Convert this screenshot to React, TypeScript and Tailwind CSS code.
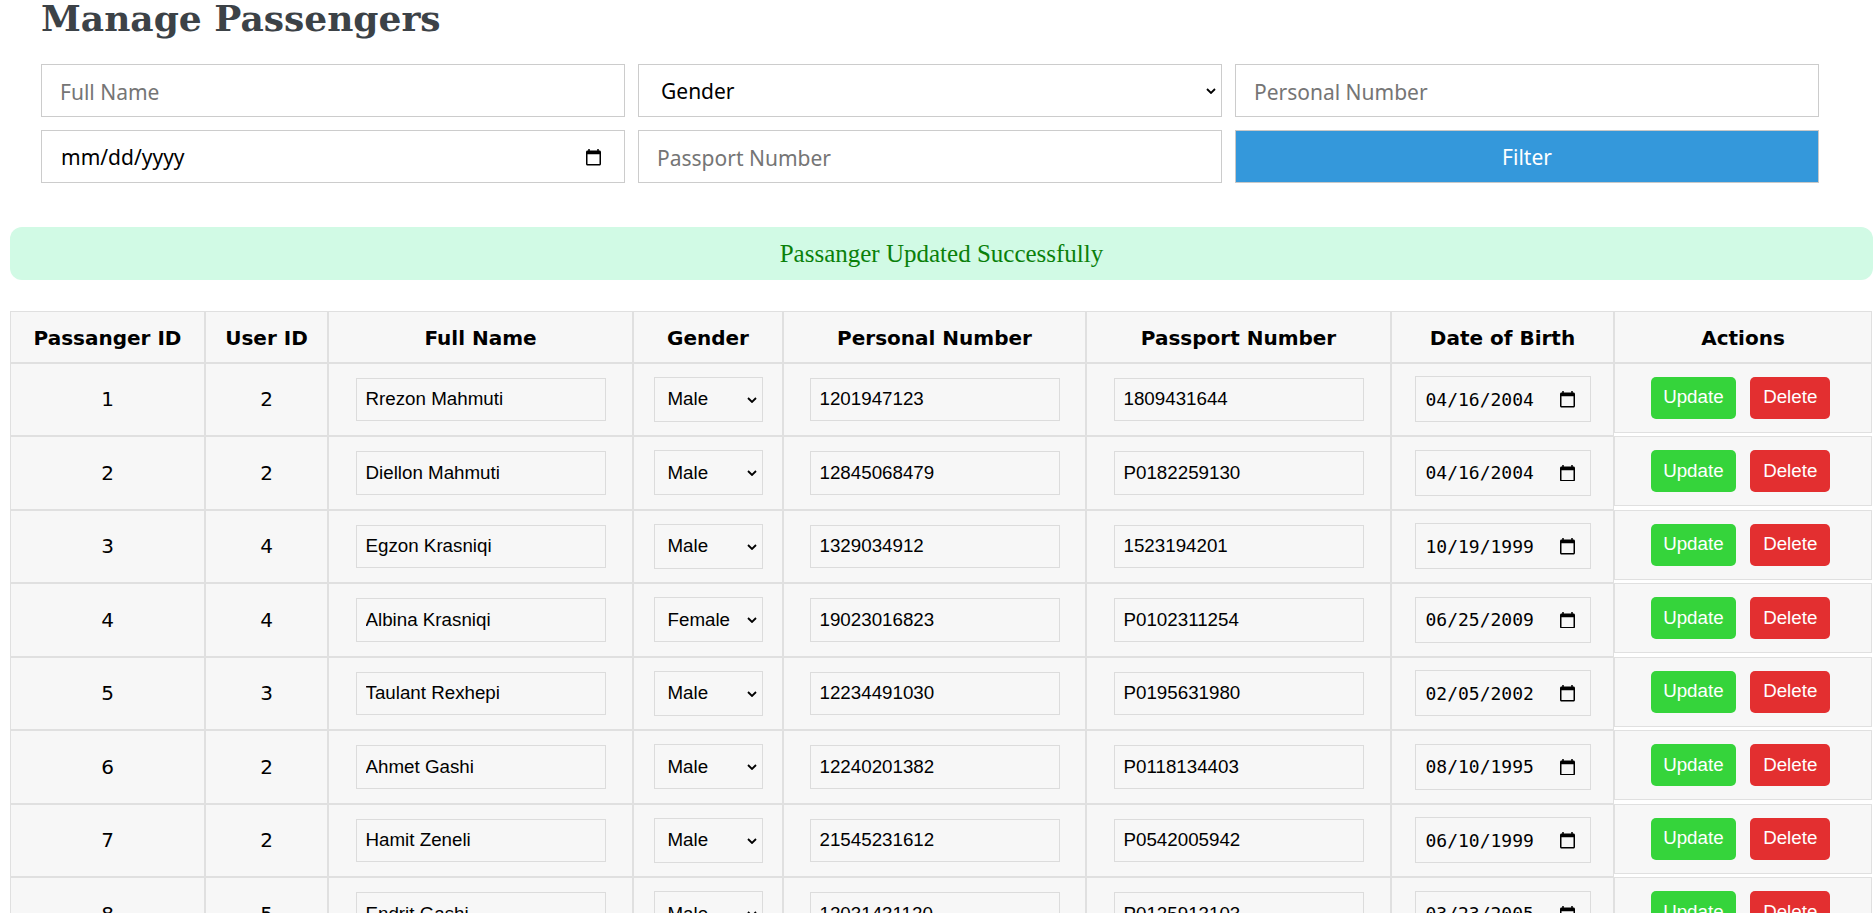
import React from "react";

type Row = {
  id: number;
  user: number;
  name: string;
  gender: string;
  pn: string;
  pp: string;
  dob: string;
};

const rows: Row[] = [
  { id: 1, user: 2, name: "Rrezon Mahmuti", gender: "Male", pn: "1201947123", pp: "1809431644", dob: "04/16/2004" },
  { id: 2, user: 2, name: "Diellon Mahmuti", gender: "Male", pn: "12845068479", pp: "P0182259130", dob: "04/16/2004" },
  { id: 3, user: 4, name: "Egzon Krasniqi", gender: "Male", pn: "1329034912", pp: "1523194201", dob: "10/19/1999" },
  { id: 4, user: 4, name: "Albina Krasniqi", gender: "Female", pn: "19023016823", pp: "P0102311254", dob: "06/25/2009" },
  { id: 5, user: 3, name: "Taulant Rexhepi", gender: "Male", pn: "12234491030", pp: "P0195631980", dob: "02/05/2002" },
  { id: 6, user: 2, name: "Ahmet Gashi", gender: "Male", pn: "12240201382", pp: "P0118134403", dob: "08/10/1995" },
  { id: 7, user: 2, name: "Hamit Zeneli", gender: "Male", pn: "21545231612", pp: "P0542005942", dob: "06/10/1999" },
  { id: 8, user: 5, name: "Endrit Gashi", gender: "Male", pn: "12031431120", pp: "P0125913103", dob: "03/23/2005" },
];

function CalendarIcon() {
  return (
    <svg viewBox="2 1 20 22" width={15} height={16.5} fill="currentColor" className="shrink-0 text-black">
      <path d="M20 3h-1V1h-2v2H7V1H5v2H4c-1.1 0-2 .9-2 2v16c0 1.1.9 2 2 2h16c1.1 0 2-.9 2-2V5c0-1.1-.9-2-2-2zm0 18H4V8h16v13z" />
    </svg>
  );
}

function Chevron({ w = 10, h = 6 }: { w?: number; h?: number }) {
  return (
    <svg width={w} height={h} viewBox="0 0 10 6" fill="none" stroke="currentColor" strokeWidth={1.8} className="text-black">
      <path d="M1 1l4 4 4-4" />
    </svg>
  );
}

const filterInput =
  "h-[53px] w-full border border-[#cccccc] bg-white pl-[18px] pr-[10px] pt-[2px] text-[21px] text-black outline-none placeholder:text-[#757575] font-['Noto_Sans',sans-serif]";

const cellInput =
  "h-[43.5px] w-[250px] border border-[#dcdcdc] bg-[#f7f7f7] pl-[9px] pr-[6px] text-[18.75px] text-black outline-none align-middle font-['Liberation_Sans',Arial,sans-serif]";

const td = "h-[73.5px] border border-[#e0e0e0] bg-[#f7f7f7] p-0 text-center align-middle";

export default function App() {
  return (
    <div className="h-[913px] w-[1876px] overflow-hidden bg-white font-['DejaVu_Sans',sans-serif]">
      <h1 className="m-0 ml-[41px] text-[36px] leading-[37px] font-bold text-[#3c4247] font-['DejaVu_Serif',serif]">
        Manage Passengers
      </h1>

      <div className="ml-[41px] mt-[27px] grid w-[1778px] grid-cols-3 gap-[13px]">
        <input className={filterInput} placeholder="Full Name" />
        <div className="relative">
          <select
            defaultValue=""
            className="h-[53px] w-full appearance-none border border-[#cccccc] bg-white pl-[22px] pt-[2px] text-[21px] text-black outline-none font-['Noto_Sans',sans-serif]"
          >
            <option value="">Gender</option>
            <option value="Male">Male</option>
            <option value="Female">Female</option>
          </select>
          <span className="pointer-events-none absolute right-[6px] top-[24px] flex">
            <Chevron />
          </span>
        </div>
        <input className={filterInput} placeholder="Personal Number" />

        <div className="flex h-[53px] items-center justify-between border border-[#cccccc] bg-white pl-[19px] pr-[23px] pt-[2px] text-[21px] text-black font-['Noto_Sans',sans-serif]">
          <span>mm/dd/yyyy</span>
          <CalendarIcon />
        </div>
        <input className={filterInput} placeholder="Passport Number" />
        <button className="h-[53px] w-full border border-[#c8c8c8] bg-[#3498db] pt-[2px] text-[21px] text-white font-['Noto_Sans',sans-serif]">
          Filter
        </button>
      </div>

      <div className="ml-[10px] mt-[44px] flex h-[53px] w-[1863px] items-center justify-center rounded-[12px] bg-[#d1fae5] text-[25px] text-[#0a800a] font-['Liberation_Serif',serif]">
        Passanger Updated Successfully
      </div>

      <table className="ml-[10px] mt-[31px] w-[1862px] table-fixed border-separate border-spacing-0">
        <colgroup>
          <col className="w-[195px]" />
          <col className="w-[123px]" />
          <col className="w-[305px]" />
          <col className="w-[150px]" />
          <col className="w-[303px]" />
          <col className="w-[305px]" />
          <col className="w-[223px]" />
          <col className="w-[258px]" />
        </colgroup>
        <thead>
          <tr>
            {["Passanger ID", "User ID", "Full Name", "Gender", "Personal Number", "Passport Number", "Date of Birth", "Actions"].map(
              (h) => (
                <th
                  key={h}
                  className="h-[51.5px] border border-[#e0e0e0] bg-[#f7f7f7] p-0 pt-[3px] text-center align-middle text-[20px] font-bold text-black"
                >
                  {h}
                </th>
              )
            )}
          </tr>
        </thead>
        <tbody>
          {rows.map((r) => (
            <tr key={r.id}>
              <td className={`${td} text-[20px] text-black`}>{r.id}</td>
              <td className={`${td} text-[20px] text-black`}>{r.user}</td>
              <td className={td}>
                <input className={cellInput} defaultValue={r.name} />
              </td>
              <td className={td}>
                <div className="relative inline-block align-middle">
                  <select
                    defaultValue={r.gender}
                    className="block h-[45px] w-[109px] appearance-none border border-[#dcdcdc] bg-[#f7f7f7] pl-[13px] text-left text-[18.75px] text-black outline-none font-['Liberation_Sans',Arial,sans-serif]"
                  >
                    <option value="Male">Male</option>
                    <option value="Female">Female</option>
                  </select>
                  <span className="pointer-events-none absolute right-[6px] top-[20px] flex">
                    <Chevron />
                  </span>
                </div>
              </td>
              <td className={td}>
                <input className={cellInput} defaultValue={r.pn} />
              </td>
              <td className={td}>
                <input className={cellInput} defaultValue={r.pp} />
              </td>
              <td className={td}>
                <div className="inline-flex h-[45.7px] w-[176px] items-center justify-between border border-[#dcdcdc] bg-[#f7f7f7] pl-[10px] pr-[15px] align-middle text-[18px] text-black font-['DejaVu_Sans_Mono',monospace]">
                  <span>{r.dob}</span>
                  <CalendarIcon />
                </div>
              </td>
              <td className="h-[73.5px] border-0 p-0 align-top">
                <div className="flex h-[70px] items-center justify-center gap-[14px] border border-[#e0e0e0] bg-[#f7f7f7] pr-[5px] font-['Liberation_Sans',Arial,sans-serif]">
                  <button className="h-[42px] rounded-[5px] bg-[#35d43b] px-[12.5px] text-[18.75px] text-white">Update</button>
                  <button className="h-[42px] rounded-[5px] bg-[#e32f30] px-[13px] text-[18.75px] text-white">Delete</button>
                </div>
              </td>
            </tr>
          ))}
        </tbody>
      </table>
    </div>
  );
}
